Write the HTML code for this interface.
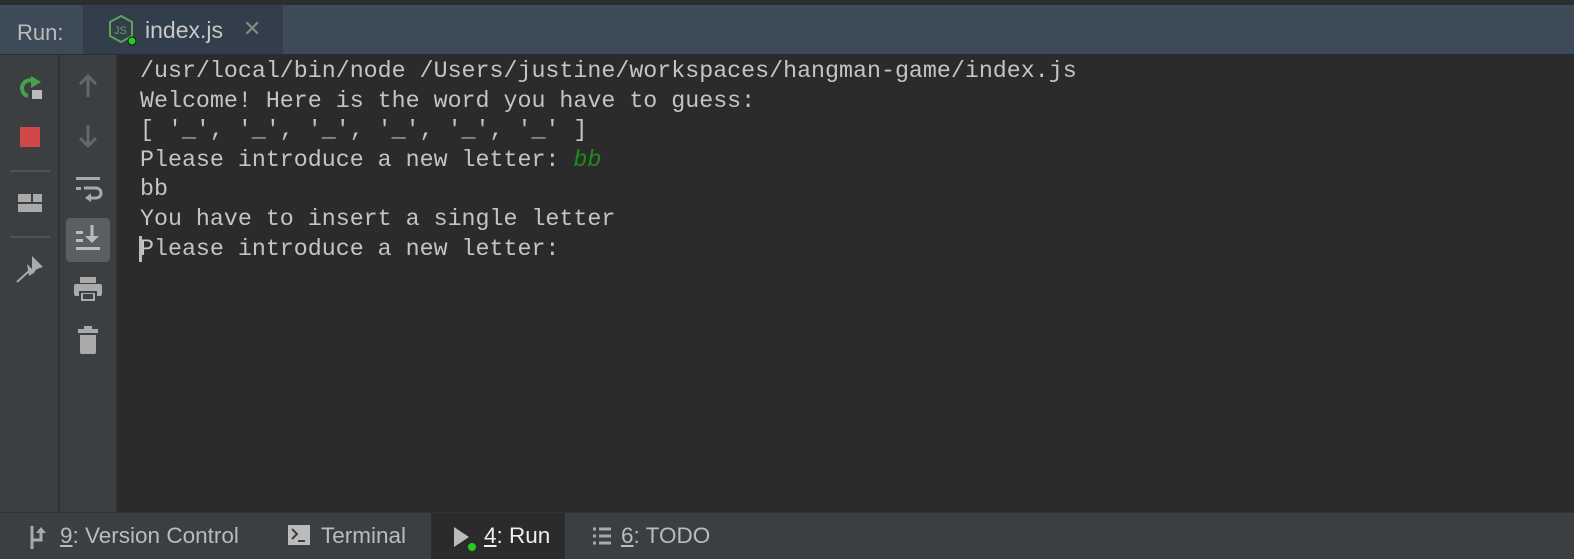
<!DOCTYPE html>
<html><head><style>
body{margin:0;width:1574px;height:558px;overflow:hidden;background:#2b2b2b;font-family:"Liberation Sans",sans-serif;position:relative}
.top{position:absolute;left:0;top:0;width:1574px;height:5px;background:#2b2d2f}
.hdr{position:absolute;left:0;top:5px;width:1574px;height:49px;background:#3d4a58;border-bottom:1px solid #2b2b2b}
.run{position:absolute;left:17px;top:15px;font-size:22px;color:#bbb}
.tab{position:absolute;left:83px;top:0;width:200px;height:49px;background:#323e4b}
.tab .t{position:absolute;left:62px;top:12px;font-size:23px;color:#c8c8c8}
.tab .x{position:absolute;left:160px;top:11px;font-size:22px;color:#888}
.c1{position:absolute;left:0;top:55px;width:58px;height:457px;background:#3c3f41;border-right:2px solid #323232}
.c2{position:absolute;left:60px;top:55px;width:56px;height:457px;background:#3c3f41;border-right:2px solid #323232}
.con{position:absolute;left:140px;top:57px;font-family:"Liberation Mono",monospace;font-size:23.3px;line-height:29.6px;color:#c4c4c4;white-space:pre}
.g{color:#1d8b1d;font-style:italic}
.bot{position:absolute;left:0;top:512px;width:1574px;height:46px;background:#3c3f41;border-top:1px solid #323232}
.bi{position:absolute;top:10px;font-size:22.5px;color:#bbb}
.u{text-decoration:underline}
</style></head><body>
<div class="top"></div>
<div class="hdr">
<div class="run">Run:</div>
<div class="tab">
<svg style="position:absolute;left:25px;top:9px" width="28" height="32" viewBox="0 0 28 32"><path d="M13 2 L24 8 L24 22 L13 28 L2 22 L2 8 Z" fill="none" stroke="#62a05a" stroke-width="2"/><text x="6" y="20" font-size="11" fill="#62a05a" font-family="Liberation Sans">JS</text><circle cx="24" cy="27" r="4" fill="#1ed01e" stroke="#111" stroke-width="1"/></svg>
<div class="t">index.js</div><div class="x">✕</div></div>
</div>
<div class="c1">
<svg style="position:absolute;left:17px;top:17px" width="28" height="30" viewBox="0 0 28 30"><path d="M18 10 A8 8 0 1 0 11 24" fill="none" stroke="#4a9e4f" stroke-width="4"/><path d="M14 4 L24 10 L14 16 Z" fill="#4a9e4f"/><rect x="15" y="18" width="10" height="9" fill="#bbb"/></svg>
<div style="position:absolute;left:20px;top:72px;width:20px;height:20px;background:#d0484a"></div>
<div style="position:absolute;left:10px;top:115px;width:40px;height:2px;background:#4e5254"></div>
<div style="position:absolute;left:18px;top:139px;width:13px;height:8px;background:#aaa"></div>
<div style="position:absolute;left:33px;top:139px;width:9px;height:8px;background:#aaa"></div>
<div style="position:absolute;left:18px;top:149px;width:24px;height:8px;background:#aaa"></div>
<div style="position:absolute;left:10px;top:181px;width:40px;height:2px;background:#4e5254"></div>
<svg style="position:absolute;left:15px;top:199px" width="30" height="30" viewBox="0 0 30 30"><path d="M17 2 L28 13 L22 15 L17 20 Z" fill="#aaa"/><path d="M12 10 L20 18 L14 22 Z" fill="#aaa"/><path d="M14 17 L2 28" stroke="#aaa" stroke-width="2"/></svg>
</div>
<div class="c2">
<svg style="position:absolute;left:16px;top:18px" width="24" height="26" viewBox="0 0 24 26"><path d="M12 3 V24 M4 11 L12 3 L20 11" fill="none" stroke="#666" stroke-width="3"/></svg>
<svg style="position:absolute;left:16px;top:68px" width="24" height="26" viewBox="0 0 24 26"><path d="M12 2 V23 M4 15 L12 23 L20 15" fill="none" stroke="#666" stroke-width="3"/></svg>
<svg style="position:absolute;left:14px;top:120px" width="30" height="28" viewBox="0 0 30 28"><rect x="2" y="2" width="24" height="3" fill="#aaa"/><rect x="2" y="12" width="5" height="3" fill="#aaa"/><path d="M10 13 H22 A5 5 0 0 1 22 23 H15" fill="none" stroke="#aaa" stroke-width="3"/><path d="M11 23 L17 18 V27 Z" fill="#aaa"/></svg>
<div style="position:absolute;left:6px;top:163px;width:44px;height:44px;background:#5a5f62;border-radius:4px"></div>
<svg style="position:absolute;left:14px;top:168px" width="30" height="34" viewBox="0 0 30 34"><rect x="2" y="8" width="7" height="3" fill="#bbb"/><rect x="2" y="16" width="7" height="3" fill="#bbb"/><rect x="2" y="24" width="24" height="3" fill="#bbb"/><path d="M18 2 V16" stroke="#bbb" stroke-width="3"/><path d="M11 13 L18 20 L25 13 Z" fill="#bbb"/></svg>
<svg style="position:absolute;left:13px;top:220px" width="30" height="30" viewBox="0 0 30 30"><rect x="7" y="2" width="16" height="6" fill="#aaa"/><rect x="1" y="9" width="28" height="12" rx="2" fill="#aaa"/><rect x="6" y="16" width="18" height="11" fill="#3c3f41"/><rect x="8" y="18" width="14" height="8" fill="#aaa"/><rect x="10" y="19" width="10" height="5" fill="#3c3f41"/></svg>
<svg style="position:absolute;left:16px;top:270px" width="24" height="30" viewBox="0 0 24 30"><rect x="8" y="1" width="8" height="3" fill="#aaa"/><rect x="2" y="4" width="20" height="4" fill="#aaa"/><path d="M4 10 H20 V27 Q20 29 18 29 H6 Q4 29 4 27 Z" fill="#aaa"/></svg>
</div>
<div class="con">/usr/local/bin/node /Users/justine/workspaces/hangman-game/index.js
Welcome! Here is the word you have to guess:
[ '_', '_', '_', '_', '_', '_' ]
Please introduce a new letter: <span class="g">bb</span>
bb
You have to insert a single letter
Please introduce a new letter:</div>
<div style="position:absolute;left:139px;top:236px;width:3px;height:26px;background:#bbb"></div>
<div class="bot">
<svg style="position:absolute;left:28px;top:11px" width="22" height="26" viewBox="0 0 22 26"><path d="M4 2 V25" stroke="#aaa" stroke-width="3"/><path d="M4 16 H13 V8" fill="none" stroke="#aaa" stroke-width="3"/><path d="M8 9 L13 3 L18 9 Z" fill="#aaa"/></svg>
<div class="bi" style="left:60px"><span class="u">9</span>: Version Control</div>
<div style="position:absolute;left:288px;top:12px;width:22px;height:20px;background:#bbb"></div>
<svg style="position:absolute;left:288px;top:12px" width="22" height="20"><path d="M4 4 L9 9 L4 14 M10 16 H17" fill="none" stroke="#3c3f41" stroke-width="2"/></svg>
<div class="bi" style="left:321px">Terminal</div>
<div style="position:absolute;left:431px;top:0;width:134px;height:46px;background:#2b2b2b"></div>
<svg style="position:absolute;left:452px;top:11px" width="26" height="28"><path d="M2 3 L17 13 L2 23 Z" fill="#bbb"/><circle cx="20" cy="23" r="4" fill="#1ed01e"/></svg>
<div class="bi" style="left:484px;color:#eee"><span class="u">4</span>: Run</div>
<svg style="position:absolute;left:592px;top:13px" width="20" height="20"><path d="M1 3H4M7 3H19M1 10H4M7 10H19M1 17H4M7 17H19" stroke="#aaa" stroke-width="3"/></svg>
<div class="bi" style="left:621px"><span class="u">6</span>: TODO</div>
</div>
</body></html>
